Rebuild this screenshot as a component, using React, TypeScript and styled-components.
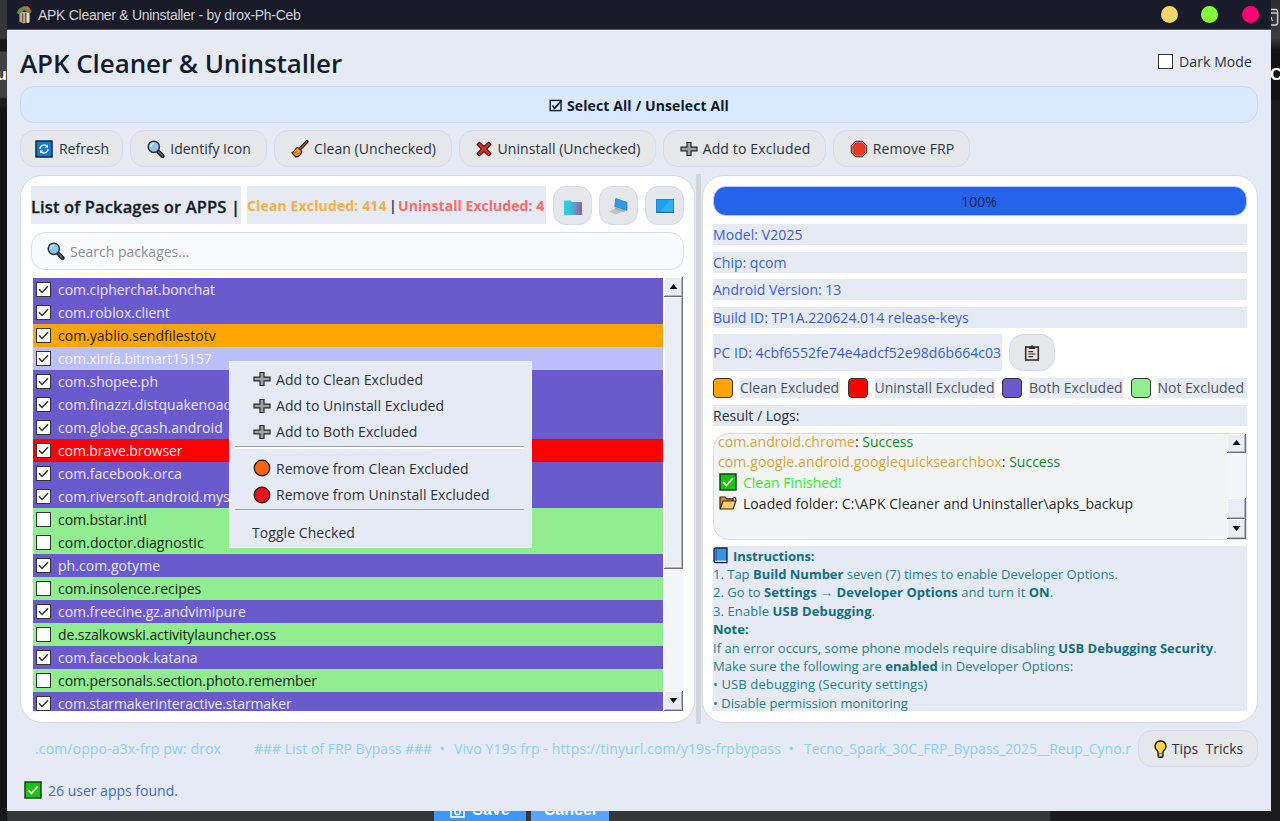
import React from "react";
import styled, { createGlobalStyle, css } from "styled-components";

const Global = createGlobalStyle`
  * { box-sizing: border-box; }
  html, body { margin: 0; padding: 0; background: #17191b; }
  body { font-family: "Open Sans", "Noto Sans", sans-serif; font-size: 14px; color: #2b3342; overflow: hidden; }
  button { font: inherit; color: inherit; padding: 0; margin: 0; }
  svg { display: block; flex: none; }
`;

const surface = "#e5eaf4";

/* ---------- desktop behind the window ---------- */
const Desktop = styled.div`
  display: grid;
  grid-template-columns: 7px 1264px 9px;
  grid-template-rows: 811px 10px;
  width: 1280px;
  height: 821px;
  overflow: hidden;
`;
const EdgeLeft = styled.div`
  overflow: hidden;
  display: flex;
  justify-content: flex-end;
  padding-top: 61px;
  color: #fff;
  font: bold 17px/28px "Liberation Sans", sans-serif;
  background: linear-gradient(#343638 0 38px, #141618 40px 51px, #3f4143 52px 97px, #1b1e20 99px 105px, #121516 110px);
`;
const EdgeRight = styled.div`
  overflow: hidden;
  color: #fff;
  font: bold 17px/28px "Liberation Sans", sans-serif;
  background: linear-gradient(#2b2d2f 0, #3a3c3f 38px, #101112 50px 98px, #1b1c1e 102px);
  svg { margin-top: 8px; }
  span { display: block; margin-top: 35px; margin-left: -1px; }
`;
const Under = styled.div`
  grid-column: 1 / 4;
  display: flex;
  overflow: hidden;
  padding-left: 434px;
  gap: 5px;
  background: linear-gradient(90deg, #17191b 7px, #35383a 8px 1049px, #1b1b1e 1051px);
`;
const UnderButton = styled.div<{ $w: number; $bg: string }>`
  width: ${(p) => p.$w}px;
  height: 10px;
  background: ${(p) => p.$bg};
  color: #fff;
  display: flex;
  justify-content: center;
  align-items: flex-end;
  gap: 7px;
  font: bold 16px/18px "Liberation Sans", sans-serif;
  padding-bottom: 2px;
  svg { margin-bottom: 1px; }
`;

/* ---------- window frame ---------- */
const Window = styled.main`
  position: relative;
  display: flex;
  flex-direction: column;
  width: 1264px;
  height: 811px;
  background: ${surface};
`;
const TitleBar = styled.header`
  display: flex;
  align-items: center;
  height: 30px;
  padding: 0 12px 0 9px;
  background: #1a1b28;
  border-bottom: 1px solid #55586a;
  color: #d0d2d8;
  font: 14px "Liberation Sans", sans-serif;
  letter-spacing: -0.29px;
`;
const TitleText = styled.span`
  flex: 1;
  padding-left: 5px;
`;
const Light = styled.i<{ $c: string; $gap?: number }>`
  width: 17px;
  height: 17px;
  border-radius: 50%;
  background: ${(p) => p.$c};
  margin-left: ${(p) => p.$gap ?? 0}px;
`;
const Content = styled.div`
  display: flex;
  flex-direction: column;
  flex: 1;
  padding: 0 13px;
`;
const Heading = styled.div`
  display: flex;
  justify-content: space-between;
  align-items: center;
  height: 56px;
  padding: 9px 6px 0 0;
  color: #131c2c;
  h1 { margin: 0; font-size: 26px; font-weight: 600; line-height: 40px; letter-spacing: -0.08px; }
`;
const DarkMode = styled.label`
  display: flex;
  align-items: center;
  gap: 6px;
  color: #2b3342;
  letter-spacing: 0.1px;
  padding-bottom: 3px;
`;
const Box = styled.span`
  display: flex;
  align-items: center;
  justify-content: center;
  flex: none;
  width: 15px;
  height: 15px;
  background: #fff;
  border: 1px solid #333;
`;
const SelectAll = styled.button`
  display: flex;
  align-items: center;
  justify-content: center;
  gap: 4px;
  height: 37px;
  padding-top: 1px;
  border: 1px solid #cbdaf4;
  border-radius: 14px;
  background: #dae9ff;
  color: #10192a;
  font-weight: 700;
  font-size: 14px;
  letter-spacing: 0.1px;
`;
const Toolbar = styled.div`
  display: flex;
  gap: 7px;
  padding: 7px 0;
`;
const pill = css`
  display: flex;
  flex: none;
  align-items: center;
  justify-content: center;
  border: 1px solid #d9d8ee;
  border-radius: 14px;
  background: #e5e7ea;
`;
const ToolButton = styled.button<{ $w: number; $gap?: number; $ls?: number }>`
  ${pill}
  width: ${(p) => p.$w}px;
  height: 37px;
  padding-left: 1px;
  gap: ${(p) => p.$gap ?? 5}px;
  letter-spacing: ${(p) => p.$ls ?? 0}px;
`;

/* ---------- panels ---------- */
const Split = styled.div`
  display: flex;
  height: 550px;
`;
const Card = styled.section<{ $w: number }>`
  display: flex;
  flex-direction: column;
  flex: none;
  width: ${(p) => p.$w}px;
  height: 548px;
  margin-top: 1px;
  padding: 10px;
  background: #fff;
  border: 1px solid #d9dbe3;
  border-radius: 22px;
`;
const Handle = styled.div`
  width: 5px;
  margin: 0 1px;
  background: #d2d5da;
`;
const ListHead = styled.div`
  display: flex;
  height: 38px;
`;
const ListTitle = styled.div`
  display: flex;
  flex: none;
  align-items: center;
  width: 210px;
  margin-right: 6px;
  padding-top: 2px;
  background: ${surface};
  color: #131c2c;
  font-size: 16.5px;
  font-weight: 600;
  letter-spacing: 0.13px;
  -webkit-text-stroke: 0.3px;
  white-space: pre;
`;
const Counts = styled.div`
  display: flex;
  flex: none;
  align-items: center;
  width: 299px;
  margin-right: 7px;
  background: ${surface};
  font-weight: 700;
  white-space: pre;
`;
const Tint = styled.span<{ $c: string; $ls?: number }>`
  color: ${(p) => p.$c};
  letter-spacing: ${(p) => p.$ls ?? 0}px;
`;
const SquareButton = styled.button`
  ${pill}
  width: 39px;
  height: 39px;
  margin-right: 7px;
  border-radius: 13px;
`;
const Search = styled.div`
  display: flex;
  align-items: center;
  gap: 5px;
  height: 38px;
  margin: 8px 0 7px;
  padding-left: 15px;
  border: 1px solid #dddcf2;
  border-radius: 14px;
  background: #fafbfd;
  color: #8b8d90;
`;
const ListBox = styled.div`
  display: flex;
  height: 434px;
  padding: 0 0 0 2px;
  overflow: hidden;
`;
const Rows = styled.div`
  width: 630px;
  overflow: hidden;
  padding-top: 0.5px;
`;
type Kind = "both" | "clean" | "uninstall" | "none" | "picked";
const rowColors: Record<Kind, [string, string]> = {
  both: ["#6a5acd", "#e9e6fb"],
  clean: ["#ffa500", "#1f1a10"],
  uninstall: ["#ff0000", "#fff0f0"],
  none: ["#90ee90", "#10240f"],
  picked: ["#bbbffc", "#f3f4ff"],
};
const Row = styled.div<{ $k: Kind; $ls?: number }>`
  display: flex;
  align-items: center;
  gap: 7px;
  height: 23px;
  padding: 1px 0 0 3px;
  background: ${(p) => rowColors[p.$k][0]};
  color: ${(p) => rowColors[p.$k][1]};
  letter-spacing: ${(p) => p.$ls ?? 0}px;
`;
const ScrollTrack = styled.div<{ $w: number }>`
  display: flex;
  flex-direction: column;
  width: ${(p) => p.$w}px;
  margin-left: 1px;
  background: #f3f5fb;
`;
const ScrollPart = styled.div<{ $h: number }>`
  display: flex;
  align-items: center;
  justify-content: center;
  height: ${(p) => p.$h}px;
  background: #e9edf5;
  border: solid #6e7076;
  border-width: 0 1px 1px 0;
  box-shadow: inset 1px 1px 0 #fff, inset -1px -1px 0 #b4b6bc;
`;
const Gap = styled.div`
  flex: 1;
`;

const Progress = styled.div`
  display: flex;
  align-items: center;
  justify-content: center;
  height: 30px;
  margin-bottom: 8px;
  padding-right: 2px;
  border: 1px solid #b9cdf8;
  border-radius: 13px;
  background: #2563eb;
  color: #17244a;
`;
const Info = styled.div<{ $c?: string; $ls?: number }>`
  height: 21px;
  margin-bottom: 6.6px;
  line-height: 22px;
  background: ${surface};
  color: ${(p) => p.$c ?? "#3b5fd9"};
  letter-spacing: ${(p) => p.$ls ?? 0}px;
  white-space: nowrap;
`;
const PcRow = styled.div`
  display: flex;
  gap: 7px;
  height: 37px;
  margin-bottom: 7px;
`;
const PcId = styled.div`
  width: 289px;
  line-height: 38px;
  background: ${surface};
  color: #3b5fd9;
  letter-spacing: 0.05px;
  white-space: nowrap;
`;
const CopyButton = styled.button`
  ${pill}
  width: 46px;
  height: 37px;
`;
const Legend = styled.div`
  display: flex;
  height: 20px;
  margin-bottom: 7px;
`;
const Swatch = styled.i<{ $c: string }>`
  flex: none;
  width: 20px;
  height: 20px;
  border: 1px solid #333;
  border-radius: 4px;
  background: ${(p) => p.$c};
`;
const LegendText = styled.span<{ $w: number }>`
  flex: none;
  width: ${(p) => p.$w}px;
  margin: 0 7.5px 0 7px;
  line-height: 20px;
  background: ${surface};
  color: #4c5565;
  white-space: nowrap;
  &:last-child { margin-right: 0; }
`;
const Logs = styled.div`
  display: flex;
  height: 107px;
  margin-bottom: 6px;
  border: 1px solid #d8daf0;
  border-radius: 16px 0 0 16px;
  background: #f3f4f6;
  color: #2a2a2a;
`;
const LogLines = styled.div`
  flex: 1;
  padding-left: 4px;
  margin-top: -3px;
`;
const LogLine = styled.div<{ $ls?: number }>`
  display: flex;
  align-items: center;
  height: 20.6px;
  white-space: pre;
  letter-spacing: ${(p) => p.$ls ?? 0}px;
  svg { margin: 0 6px 0 1px; }
`;
const Instructions = styled.div`
  height: 165px;
  background: ${surface};
  color: #27808f;
  font-size: 13px;
  b { color: #0f7084; font-weight: 700; }
`;
const Line = styled.div<{ $ls?: number }>`
  display: flex;
  align-items: center;
  height: 18.4px;
  padding-top: 1px;
  white-space: pre;
  letter-spacing: ${(p) => p.$ls ?? 0}px;
  svg { margin-right: 5px; }
`;

/* ---------- footer ---------- */
const Footer = styled.div`
  display: flex;
  align-items: center;
  justify-content: space-between;
  height: 37px;
  margin-top: 6px;
`;
const Ticker = styled.div`
  display: flex;
  width: 1097px;
  margin-left: 15px;
  overflow: hidden;
  white-space: pre;
  color: #8fd0fa;
`;
const TickerItem = styled.span<{ $w: number; $ls?: number }>`
  flex: none;
  width: ${(p) => p.$w}px;
  letter-spacing: ${(p) => p.$ls ?? 0}px;
`;
const Status = styled.div`
  display: flex;
  align-items: center;
  gap: 6px;
  padding-left: 4px;
  margin-top: 12px;
  height: 22px;
  color: #4169e1;
`;

/* ---------- context menu ---------- */
const Menu = styled.div`
  position: absolute;
  left: 222px;
  top: 361px;
  width: 303px;
  height: 187px;
  padding: 4px 7px 0 5px;
  background: ${surface};
  border: 1px solid #eef1f8;
`;
const MenuItem = styled.div<{ $plain?: boolean }>`
  display: flex;
  align-items: center;
  gap: 5px;
  height: 26.4px;
  padding-left: ${(p) => (p.$plain ? 17 : 18)}px;
  letter-spacing: 0.06px;
`;
const MenuRule = styled.div<{ $bright?: boolean }>`
  height: 3px;
  margin: 1px 0 ${(p) => (p.$bright ? 6 : 7)}px;
  border-top: 1px solid #9da1ab;
  background: ${(p) => (p.$bright ? "#fff" : "transparent")};
`;

/* ---------- icons ---------- */
const Check = () => (
  <svg width="11" height="9" viewBox="0 0 11 9"><path d="M1 4.2 4 7.4 10 1.2" fill="none" stroke="#333" strokeWidth="1.5" /></svg>
);
const Refresh = () => (
  <svg width="18" height="18" viewBox="0 0 18 18">
    <rect x="1" y="1" width="16" height="16" fill="#1379d3" stroke="#0b1c30" strokeWidth="1.4" />
    <path d="M5 9A4 4 0 0 1 11.8 6.2M13 9A4 4 0 0 1 6.2 11.8" fill="none" stroke="#e2f2ff" strokeWidth="1.4" />
    <path d="M13 4.4v3.4H9.6zM5 13.6v-3.4h3.4z" fill="#e2f2ff" />
  </svg>
);
const Magnifier = () => (
  <svg width="18" height="18" viewBox="0 0 18 18">
    <path d="M10.5 10.8 15.6 16" stroke="#151515" strokeWidth="4" strokeLinecap="round" />
    <path d="M11.6 12 15.4 15.8" stroke="#56616b" strokeWidth="1.8" strokeLinecap="round" />
    <circle cx="6.8" cy="6.8" r="5.6" fill="#8cc6ee" stroke="#2c3238" strokeWidth="1.5" />
    <path d="M3.8 7A3.2 3.2 0 0 1 7 3.6" fill="none" stroke="#d4edfc" strokeWidth="1.5" />
  </svg>
);
const Broom = () => (
  <svg width="18" height="18" viewBox="0 0 18 18">
    <path d="M8.4 9.6 16 1.6" stroke="#24150c" strokeWidth="3.2" strokeLinecap="round" />
    <path d="M8.6 9.4 15.8 1.8" stroke="#a0522d" strokeWidth="1.4" strokeLinecap="round" />
    <path d="M6.6 7.4 10.8 11.4C10.2 14 8 16.6 5 17 3.6 15.6 2 14.4 1 12.6 3.4 12 4.2 8.4 6.6 7.4Z" fill="#f5a72c" stroke="#2b1b09" strokeWidth="1.2" />
    <path d="M3.4 13.4 6 11.4M5.4 15 8 12.4" stroke="#8a4f10" />
    <path d="M6.4 8.4 9.8 11.6" stroke="#e8862a" strokeWidth="1.2" />
  </svg>
);
const Cross = () => (
  <svg width="16" height="16" viewBox="0 0 16 16">
    <path d="M1 3.4 3.4 1.2 8 5.4 12.6 1.2 15 3.4 10.6 8 15 12.6 12.6 14.8 8 10.6 3.4 14.8 1 12.6 5.4 8Z" fill="#d9361c" stroke="#3a0f08" strokeWidth="1.1" />
  </svg>
);
const Plus = () => (
  <svg width="18" height="16" viewBox="0 0 18 16">
    <path d="M7 1.5h4v4.6h6v3.8h-6v4.6H7V9.9H1V6.1h6Z" fill="#9fa2a5" stroke="#26282b" strokeWidth="1.2" />
  </svg>
);
const StopSign = () => (
  <svg width="18" height="18" viewBox="0 0 18 18">
    <path d="M5.6 .8h6.8l4.8 4.8v6.8l-4.8 4.8H5.6L.8 12.4V5.6Z" fill="#2c1210" />
    <path d="M6 2h6l4 4v6l-4 4H6l-4-4V6Z" fill="#e8392b" stroke="#f7c4bd" strokeWidth=".6" />
  </svg>
);
const Dot = ({ c }: { c: string }) => (
  <svg width="18" height="18" viewBox="0 0 18 18"><circle cx="9" cy="9" r="7.8" fill={c} stroke="#20160f" strokeWidth="1.2" /></svg>
);
const GreenCheck = () => (
  <svg width="18" height="18" viewBox="0 0 18 18">
    <rect x="1" y="1" width="16" height="16" fill="#16c60c" stroke="#12350f" strokeWidth="1.4" />
    <path d="M4.2 9.2 7.4 12.4 13.8 5.4" fill="none" stroke="#fff" strokeWidth="1.7" />
  </svg>
);
const OpenFolder = () => (
  <svg width="18" height="14" viewBox="0 0 18 14">
    <path d="M1 12.6V1h5.2l1.4 1.8h6.6v2.4" fill="#e0912f" stroke="#33220c" strokeWidth="1.2" />
    <path d="M1.2 13 4 5h12.8l-2.6 8Z" fill="#ffcf6b" stroke="#33220c" strokeWidth="1.1" />
    <path d="M14.2 1.4h2.4L17 5" fill="none" stroke="#33220c" />
  </svg>
);
const Book = () => (
  <svg width="15" height="17" viewBox="0 0 15 17">
    <path d="M3 1h11v14.6H3A2 2 0 0 1 1 14V3a2 2 0 0 1 2-2Z" fill="#3a93dd" stroke="#0f2740" strokeWidth="1.3" />
    <path d="M2.2 14.2H13.4" stroke="#d8e6f2" strokeWidth="1.4" />
    <path d="M3.4 1.6V13.4" stroke="#2269ad" strokeWidth="1.2" />
  </svg>
);
const Bulb = () => (
  <svg width="13" height="18" viewBox="0 0 13 18">
    <path d="M6.5 1a5.3 5.3 0 0 1 3.2 9.6c-.7.6-.8 1.3-.8 2.4v3c0 .8-.5 1.2-1.2 1.2H5.3c-.7 0-1.2-.4-1.2-1.2v-3c0-1.1-.1-1.8-.8-2.4A5.3 5.3 0 0 1 6.5 1Z" fill="#ffd352" stroke="#17130a" strokeWidth="1.4" />
    <path d="M4.8 13.4h3.4v3H4.8Z" fill="#e6e8ea" stroke="#3b3a36" strokeWidth=".7" />
  </svg>
);
const BallotBox = () => (
  <svg width="14" height="13" viewBox="0 0 14 13">
    <rect x="1.2" y="1.4" width="10.8" height="10.2" fill="none" stroke="#10192a" strokeWidth="1.4" />
    <path d="M3.4 6.4 5.6 9.4 12.4 1.6" fill="none" stroke="#10192a" strokeWidth="1.6" />
  </svg>
);
const Clipboard = () => (
  <svg width="16" height="17" viewBox="0 0 16 17">
    <rect x="1.7" y="3" width="12.6" height="13" fill="#e9e6e4" stroke="#3a3029" strokeWidth="1.6" />
    <path d="M4.8 5V2.8h1.8L8 .8l1.4 2h1.8V5Z" fill="#3a3029" />
    <path d="M4.4 7.6h4.8M4.4 10h7.2M4.4 12.6h4.8" stroke="#2b2b2b" strokeWidth="1.2" />
  </svg>
);
const FolderIcon = () => (
  <svg width="18" height="18" viewBox="0 0 18 18">
    <defs><linearGradient id="fold"><stop offset=".25" stopColor="#2bd0e0" /><stop offset="1" stopColor="#a0599f" /></linearGradient></defs>
    <path d="M0 3.6h6.4L8 5h10v13H0Z" fill="url(#fold)" />
  </svg>
);
const DeviceIcon = () => (
  <svg width="19" height="18" viewBox="0 0 19 18">
    <path d="M.4 14.4 6 11.4 14.6 14.6 6.4 17.4Z" fill="#c0c3c7" />
    <path d="M6 10.2 16.6 13.6 15 15 6 12Z" fill="#a3a8ae" />
    <path d="M6.8 1.6 18 5.4v8L5.8 9.4Z" fill="#2f9be8" stroke="#3b6f9e" strokeWidth=".7" />
  </svg>
);
const ScreenIcon = () => (
  <svg width="18" height="14" viewBox="0 0 18 14">
    <rect x=".5" y=".5" width="17" height="13" fill="#16a2fa" stroke="#2b83c2" />
    <path d="M.5 13.2h17" stroke="#365c7d" />
    <path d="M4 12.6 14 1.2h3v11.4Z" fill="#2cb0ff" />
  </svg>
);
const HomeIcon = () => (
  <svg width="17" height="19" viewBox="0 0 17 19">
    <path d="M3.4 7h10v10l-6 1.4-4-2Z" fill="#b7a98a" />
    <path d="M6.6 8.6v9.2M9.6 8v10" stroke="#6c6455" strokeWidth="1.2" />
    <path d="M11 8h2.4v9.4L11 18Z" fill="#e3dccb" />
    <path d="M.6 8 3 3.6 8.2 1 15.8 6 14 8.6 8 5.2 3 9.2Z" fill="#5f8a4e" />
    <path d="M6.6 2.2 11.4 1 14.6 4 13.4 6.2Z" fill="#cf6336" />
  </svg>
);
const Arrow = ({ down }: { down?: boolean }) => (
  <svg width="9" height="5" viewBox="0 0 9 5"><path d={down ? "M.5 0h8L4.5 5Z" : "M.5 5h8L4.5 0Z"} fill="#111" /></svg>
);
const PanelGlyph = () => (
  <svg width="8" height="18" viewBox="0 0 8 18">
    <path d="M0 1.5h4.5A2 2 0 0 1 6.6 3.5V15A2 2 0 0 1 4.5 17H0M0 5h6.6" fill="none" stroke="#d0d2d4" strokeWidth="1.4" />
    <path d="M0 8.6 1.4 13" stroke="#d0d2d4" />
  </svg>
);
const SaveGlyph = () => (
  <svg width="15" height="16" viewBox="0 0 15 16">
    <rect x="1" y="1" width="13" height="14" fill="none" stroke="#fff" strokeWidth="1.6" />
    <circle cx="7.5" cy="10" r="2.6" fill="none" stroke="#fff" strokeWidth="1.5" />
  </svg>
);

const packages: { name: string; kind: Kind; on: boolean; ls?: number }[] = [
  { name: "com.cipherchat.bonchat", kind: "both", on: true, ls: -0.05 },
  { name: "com.roblox.client", kind: "both", on: true, ls: -0.05 },
  { name: "com.yablio.sendfilestotv", kind: "clean", on: true },
  { name: "com.xinfa.bitmart15157", kind: "picked", on: true, ls: -0.1 },
  { name: "com.shopee.ph", kind: "both", on: true, ls: -0.05 },
  { name: "com.finazzi.distquakenoads", kind: "both", on: true },
  { name: "com.globe.gcash.android", kind: "both", on: true, ls: 0.05 },
  { name: "com.brave.browser", kind: "uninstall", on: true, ls: -0.1 },
  { name: "com.facebook.orca", kind: "both", on: true },
  { name: "com.riversoft.android.mysword", kind: "both", on: true },
  { name: "com.bstar.intl", kind: "none", on: false, ls: -0.08 },
  { name: "com.doctor.diagnostic", kind: "none", on: false, ls: 0.05 },
  { name: "ph.com.gotyme", kind: "both", on: true, ls: 0.05 },
  { name: "com.insolence.recipes", kind: "none", on: false, ls: -0.05 },
  { name: "com.freecine.gz.andvimipure", kind: "both", on: true, ls: -0.04 },
  { name: "de.szalkowski.activitylauncher.oss", kind: "none", on: false, ls: -0.08 },
  { name: "com.facebook.katana", kind: "both", on: true },
  { name: "com.personals.section.photo.remember", kind: "none", on: false, ls: -0.08 },
  { name: "com.starmakerinteractive.starmaker", kind: "both", on: true, ls: -0.12 },
];

export default function App() {
  return (
    <>
      <Global />
      <Desktop>
        <EdgeLeft>u</EdgeLeft>
        <Window>
          <TitleBar>
            <HomeIcon />
            <TitleText>APK Cleaner &amp; Uninstaller - by drox-Ph-Ceb</TitleText>
            <Light $c="#f0d56c" />
            <Light $c="#82ff3c" $gap={23} />
            <Light $c="#ff0074" $gap={24} />
          </TitleBar>
          <Content>
            <Heading>
              <h1>APK Cleaner &amp; Uninstaller</h1>
              <DarkMode><Box />Dark Mode</DarkMode>
            </Heading>
            <SelectAll><BallotBox />Select All / Unselect All</SelectAll>
            <Toolbar>
              <ToolButton $w={103} $gap={6}><Refresh />Refresh</ToolButton>
              <ToolButton $w={137}><Magnifier />Identify Icon</ToolButton>
              <ToolButton $w={178} $ls={0.06}><Broom />Clean (Unchecked)</ToolButton>
              <ToolButton $w={197} $gap={6} $ls={0.05}><Cross />Uninstall (Unchecked)</ToolButton>
              <ToolButton $w={163} $ls={0.14}><Plus />Add to Excluded</ToolButton>
              <ToolButton $w={137} $ls={0.08}><StopSign />Remove FRP</ToolButton>
            </Toolbar>
            <Split>
              <Card $w={675}>
                <ListHead>
                  <ListTitle>List of Packages or APPS |</ListTitle>
                  <Counts>
                    <Tint $c="#fbb040" $ls={0.14}>Clean Excluded: 414</Tint>
                    <Tint $c="#3d4453" $ls={-1.2}> | </Tint>
                    <Tint $c="#ff6b6b" $ls={0.05}>Uninstall Excluded: 4</Tint>
                  </Counts>
                  <SquareButton><FolderIcon /></SquareButton>
                  <SquareButton><DeviceIcon /></SquareButton>
                  <SquareButton><ScreenIcon /></SquareButton>
                </ListHead>
                <Search><Magnifier />Search packages...</Search>
                <ListBox>
                  <Rows>
                    {packages.map((p) => (
                      <Row key={p.name} $k={p.kind} $ls={p.ls}>
                        <Box>{p.on && <Check />}</Box>
                        {p.name}
                      </Row>
                    ))}
                  </Rows>
                  <ScrollTrack $w={19}>
                    <ScrollPart $h={20}><Arrow /></ScrollPart>
                    <ScrollPart $h={272} />
                    <Gap />
                    <ScrollPart $h={20}><Arrow down /></ScrollPart>
                  </ScrollTrack>
                </ListBox>
              </Card>
              <Handle />
              <Card $w={556}>
                <Progress>100%</Progress>
                <Info $ls={0.08}>Model: V2025</Info>
                <Info>Chip: qcom</Info>
                <Info>Android Version: 13</Info>
                <Info $ls={0.02}>Build ID: TP1A.220624.014 release-keys</Info>
                <PcRow>
                  <PcId>PC ID: 4cbf6552fe74e4adcf52e98d6b664c03</PcId>
                  <CopyButton><Clipboard /></CopyButton>
                </PcRow>
                <Legend>
                  <Swatch $c="#ffa500" /><LegendText $w={100}>Clean Excluded</LegendText>
                  <Swatch $c="#ff0000" /><LegendText $w={120}>Uninstall Excluded</LegendText>
                  <Swatch $c="#6a5acd" /><LegendText $w={94}>Both Excluded</LegendText>
                  <Swatch $c="#90ee90" /><LegendText $w={89}>Not Excluded</LegendText>
                </Legend>
                <Info $c="#2a303c">Result / Logs:</Info>
                <Logs>
                  <LogLines>
                    <LogLine><Tint $c="#daa535">com.android.chrome</Tint>: <Tint $c="#0f8a1c">Success</Tint></LogLine>
                    <LogLine><Tint $c="#daa535" $ls={0.11}>com.google.android.googlequicksearchbox</Tint>: <Tint $c="#0f8a1c">Success</Tint></LogLine>
                    <LogLine><GreenCheck /><Tint $c="#32f032">Clean Finished!</Tint></LogLine>
                    <LogLine $ls={0.04}><OpenFolder />Loaded folder: C:\APK Cleaner and Uninstaller\apks_backup</LogLine>
                  </LogLines>
                  <ScrollTrack $w={19}>
                    <ScrollPart $h={19}><Arrow /></ScrollPart>
                    <Gap />
                    <ScrollPart $h={21} />
                    <ScrollPart $h={20}><Arrow down /></ScrollPart>
                  </ScrollTrack>
                </Logs>
                <Instructions>
                  <Line $ls={-0.08}><Book /><b>Instructions:</b></Line>
                  <Line>1. Tap <b>Build Number</b> seven (7) times to enable Developer Options.</Line>
                  <Line $ls={0.03}>2. Go to <b>Settings</b> → <b>Developer Options</b> and turn it <b>ON</b>.</Line>
                  <Line $ls={0.1}>3. Enable <b>USB Debugging</b>.</Line>
                  <Line><b>Note:</b></Line>
                  <Line $ls={0.035}>If an error occurs, some phone models require disabling <b>USB Debugging Security</b>.</Line>
                  <Line $ls={0.03}>Make sure the following are <b>enabled</b> in Developer Options:</Line>
                  <Line $ls={0.12}>• USB debugging (Security settings)</Line>
                  <Line $ls={0.02}>• Disable permission monitoring</Line>
                </Instructions>
              </Card>
            </Split>
            <Footer>
              <Ticker>
                <TickerItem $w={219} $ls={0.14}>.com/oppo-a3x-frp pw: drox</TickerItem>
                <TickerItem $w={200}>### List of FRP Bypass ###  • </TickerItem>
                <TickerItem $w={350} $ls={0.12}>Vivo Y19s frp - https://tinyurl.com/y19s-frpbypass  • </TickerItem>
                <TickerItem $w={328} $ls={-0.03}>Tecno_Spark_30C_FRP_Bypass_2025__Reup_Cyno.r</TickerItem>
              </Ticker>
              <ToolButton $w={120}><Bulb /><span>Tips &nbsp;Tricks</span></ToolButton>
            </Footer>
            <Status><GreenCheck />26 user apps found.</Status>
          </Content>
          <Menu>
            <MenuItem><Plus />Add to Clean Excluded</MenuItem>
            <MenuItem><Plus />Add to Uninstall Excluded</MenuItem>
            <MenuItem><Plus />Add to Both Excluded</MenuItem>
            <MenuRule $bright />
            <MenuItem><Dot c="#f7630c" />Remove from Clean Excluded</MenuItem>
            <MenuItem><Dot c="#e81224" />Remove from Uninstall Excluded</MenuItem>
            <MenuRule />
            <MenuItem $plain>Toggle Checked</MenuItem>
          </Menu>
        </Window>
        <EdgeRight><PanelGlyph /><span>C</span></EdgeRight>
        <Under>
          <UnderButton $w={92} $bg="#3d97fd"><SaveGlyph />Save</UnderButton>
          <UnderButton $w={78} $bg="#58a5ff">Cancel</UnderButton>
        </Under>
      </Desktop>
    </>
  );
}
